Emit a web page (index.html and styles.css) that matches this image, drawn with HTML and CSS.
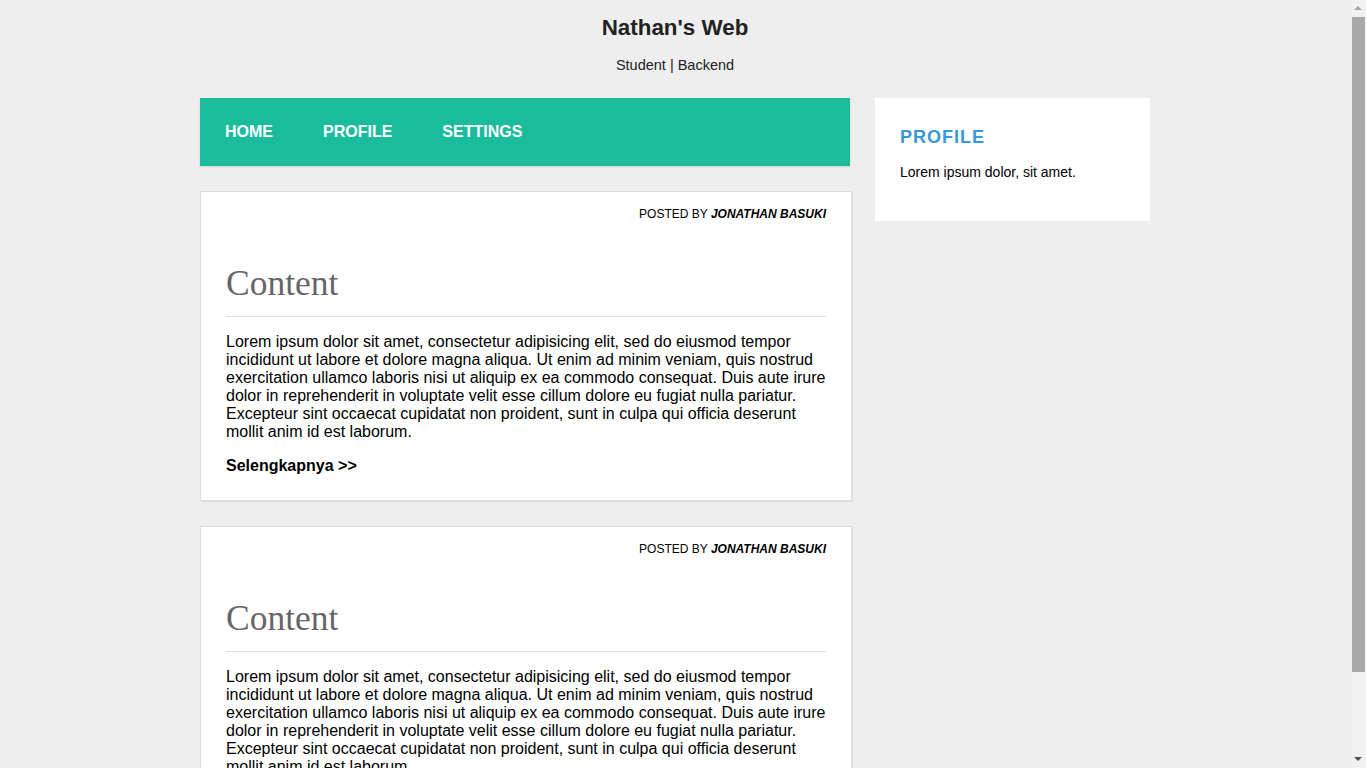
FILE: index.html
```html
<!DOCTYPE html>
<html lang="en">
<head>
<meta charset="utf-8">
<title>Nathan's Web</title>
<link rel="stylesheet" href="styles.css">
</head>
<body>
<header class="site-header">
  <h1 class="site-title">Nathan's Web</h1>
  <p class="site-subtitle">Student | Backend</p>
</header>
<div class="container">
  <main class="main">
    <nav class="nav">
      <a class="nav-link" href="#">HOME</a>
      <a class="nav-link" href="#">PROFILE</a>
      <a class="nav-link" href="#">SETTINGS</a>
    </nav>
    <article class="card">
      <p class="posted">POSTED BY <strong><em>JONATHAN BASUKI</em></strong></p>
      <h2 class="card-title">Content</h2>
      <p class="card-text">Lorem ipsum dolor sit amet, consectetur adipisicing elit, sed do eiusmod tempor incididunt ut labore et dolore magna aliqua. Ut enim ad minim veniam, quis nostrud exercitation ullamco laboris nisi ut aliquip ex ea commodo consequat. Duis aute irure dolor in reprehenderit in voluptate velit esse cillum dolore eu fugiat nulla pariatur. Excepteur sint occaecat cupidatat non proident, sunt in culpa qui officia deserunt mollit anim id est laborum.</p>
      <a class="more" href="#">Selengkapnya &gt;&gt;</a>
    </article>
    <article class="card">
      <p class="posted">POSTED BY <strong><em>JONATHAN BASUKI</em></strong></p>
      <h2 class="card-title">Content</h2>
      <p class="card-text">Lorem ipsum dolor sit amet, consectetur adipisicing elit, sed do eiusmod tempor incididunt ut labore et dolore magna aliqua. Ut enim ad minim veniam, quis nostrud exercitation ullamco laboris nisi ut aliquip ex ea commodo consequat. Duis aute irure dolor in reprehenderit in voluptate velit esse cillum dolore eu fugiat nulla pariatur. Excepteur sint occaecat cupidatat non proident, sunt in culpa qui officia deserunt mollit anim id est laborum.</p>
      <a class="more" href="#">Selengkapnya &gt;&gt;</a>
    </article>
  </main>
  <aside class="sidebar">
    <h3 class="side-title">PROFILE</h3>
    <p class="side-text">Lorem ipsum dolor, sit amet.</p>
  </aside>
</div>
<div class="scrollbar" aria-hidden="true">
  <span class="scroll-arrow scroll-up"></span>
  <span class="scroll-thumb"></span>
  <span class="scroll-arrow scroll-down"></span>
</div>
</body>
</html>
```
FILE: styles.css
```css
html, body {
  margin: 0;
  padding: 0;
}
body {
  background: #eeeeee;
  font-family: "Liberation Sans", Arial, sans-serif;
  color: #000;
  padding-right: 16px;
}
.site-header {
  text-align: center;
  padding-top: 15px;
  padding-bottom: 24px;
  color: #222;
}
.site-title {
  margin: 0;
  font-size: 22.4px;
  line-height: 26px;
  font-weight: bold;
}
.site-subtitle {
  margin: 16px 0 0;
  font-size: 14.5px;
  line-height: 17px;
}
.container {
  width: 950px;
  margin: 0 auto;
  display: flex;
  gap: 25px;
  align-items: flex-start;
  padding-bottom: 25px;
}
.main {
  width: 650px;
  flex: none;
  display: flex;
  flex-direction: column;
  align-items: flex-start;
  gap: 25px;
}
.nav {
  align-self: stretch;
  background: #1abc9c;
  display: flex;
  box-shadow: 0 1px 2px rgba(0,0,0,0.12);
}
.nav-link {
  color: #fff;
  text-decoration: none;
  font-weight: bold;
  font-size: 16px;
  line-height: 19px;
  padding: 24px 25px 25px;
}
.card {
  width: 600px;
  background: #fff;
  border: 1px solid #dddddd;
  box-shadow: 1px 1px 1px rgba(0,0,0,0.06);
  padding: 15px 25px 25px;
}
.posted {
  margin: 0;
  text-align: right;
  font-size: 12px;
  line-height: 14px;
}
.card-title {
  margin: 42px 0 0;
  font-family: Georgia, "Liberation Serif", serif;
  font-weight: normal;
  font-size: 35.5px;
  line-height: 40px;
  color: #666;
  padding-bottom: 13px;
  border-bottom: 1px solid #dddddd;
}
.card-text {
  margin: 16px 0 16px;
  font-size: 16px;
  line-height: 18px;
}
.more {
  display: block;
  color: #000;
  text-decoration: none;
  font-weight: bold;
  font-size: 16px;
  line-height: 18px;
}
.sidebar {
  width: 275px;
  flex: none;
  box-sizing: border-box;
  background: #fff;
  padding: 25px 25px 25px;
}
.side-title {
  margin: 4px 0 0;
  color: #3498db;
  font-size: 18px;
  line-height: 21px;
  letter-spacing: 1px;
  font-weight: 900;
}
.side-text {
  margin: 16px 0 16px;
  font-size: 14px;
  line-height: 16px;
}
.scrollbar {
  position: fixed;
  top: 0;
  right: 0;
  width: 15px;
  height: 100vh;
  background: #f1f1f1;
}
.scroll-thumb {
  position: absolute;
  left: 1px;
  top: 17px;
  width: 13px;
  height: 655px;
  background: #a8a8a8;
}
.scroll-arrow {
  position: absolute;
  left: 3px;
  width: 0;
  height: 0;
  border-left: 4.5px solid transparent;
  border-right: 4.5px solid transparent;
}
.scroll-up {
  top: 6px;
  border-bottom: 4px solid #a3a3a3;
}
.scroll-down {
  bottom: 7px;
  border-top: 4px solid #505050;
}
```
